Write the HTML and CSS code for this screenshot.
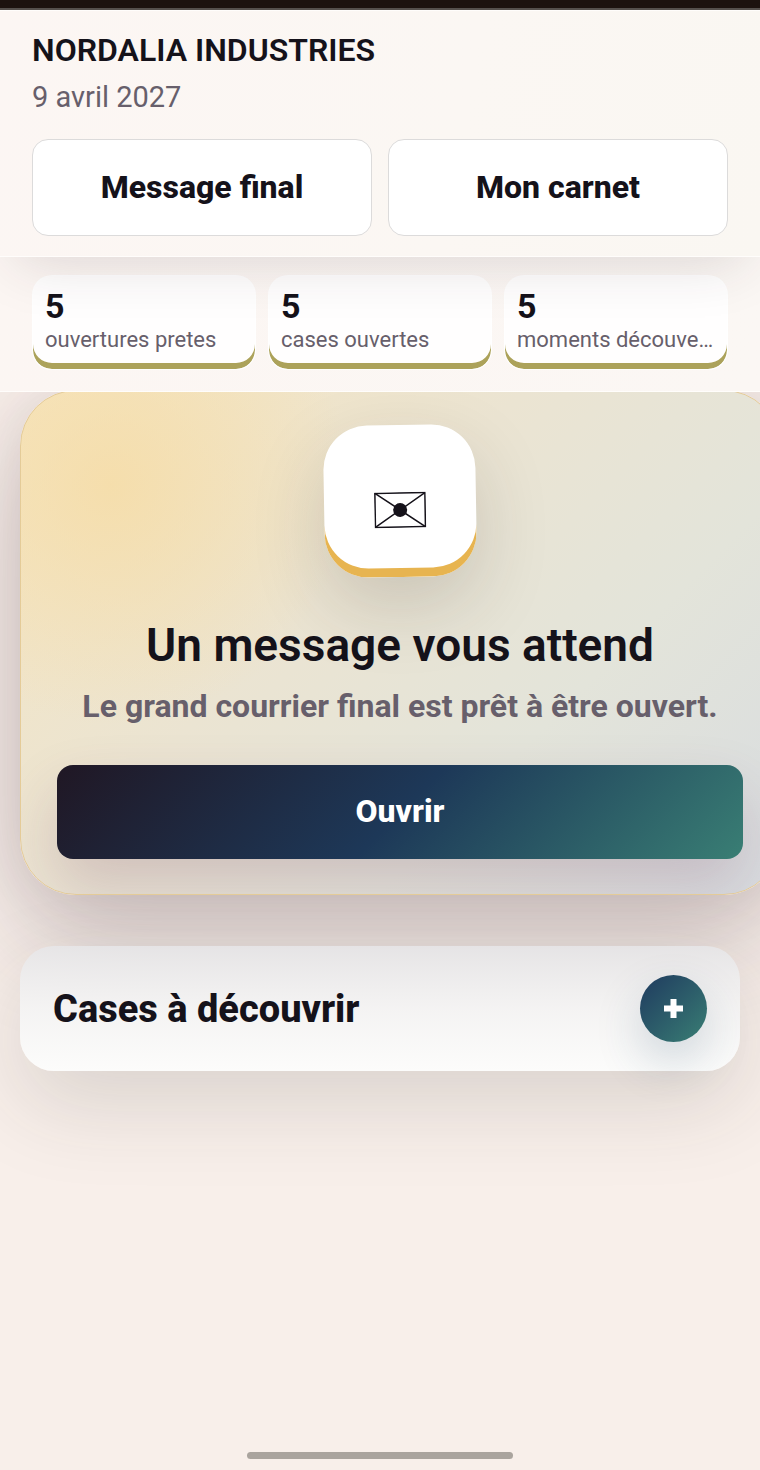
FILE: index.html
```html
<!DOCTYPE html>
<html lang="fr">
<head>
<meta charset="utf-8">
<meta name="viewport" content="width=device-width, initial-scale=1">
<title>Nordalia Industries</title>
<link rel="stylesheet" href="styles.css">
</head>
<body>
<div class="page">
  <header class="topbar">
    <h1 class="company">NORDALIA INDUSTRIES</h1>
    <p class="date">9 avril 2027</p>
    <nav class="actions">
      <button class="action" type="button">Message final</button>
      <button class="action" type="button">Mon carnet</button>
    </nav>
  </header>
  <section class="stats">
    <div class="stat"><strong class="stat-value">5</strong><span class="stat-label">ouvertures pretes</span></div>
    <div class="stat"><strong class="stat-value">5</strong><span class="stat-label">cases ouvertes</span></div>
    <div class="stat"><strong class="stat-value">5</strong><span class="stat-label">moments découverts</span></div>
  </section>
  <main class="content">
    <section class="hero">
      <div class="tile">
        <svg class="envelope" viewBox="0 0 52 36" aria-hidden="true">
          <rect x="1" y="1" width="50" height="34" fill="none" stroke="currentColor" stroke-width="1.5"/>
          <path d="M1 1 26 18 51 1M1 35 26 18 51 35" fill="none" stroke="currentColor" stroke-width="1.5"/>
          <circle cx="26" cy="18" r="7" fill="currentColor"/>
        </svg>
      </div>
      <h2 class="hero-title">Un message vous attend</h2>
      <p class="hero-text">Le grand courrier final est prêt à être ouvert.</p>
      <button class="open" type="button">Ouvrir</button>
    </section>
    <section class="cases">
      <h2 class="cases-title">Cases à découvrir</h2>
      <button class="plus" type="button" aria-label="Afficher les cases">
        <svg class="plus-icon" viewBox="0 0 19 19" aria-hidden="true"><path d="M6.500 0h6v6.500h6.500v6h-6.500V19h-6v-6.500H0v-6h6.500z" fill="currentColor"/></svg>
      </button>
    </section>
  </main>
  <footer class="home"><div class="home-bar"></div></footer>
</div>
</body>
</html>
```
FILE: styles.css
```css
* { box-sizing: border-box; }

body {
  margin: 0;
  font-family: Roboto, "Liberation Sans", sans-serif;
  color: #15121a;
  background: #f8efea;
}

h1, h2, p { margin: 0; }
button { font: inherit; color: inherit; padding: 0; }

.page {
  display: flex;
  flex-direction: column;
  min-height: 100vh;
  overflow: hidden;
}

.topbar {
  position: relative;
  z-index: 3;
  padding: 20px 32px;
  border-top: 10px solid #1c120f;
  border-bottom: 1px solid #fffdfb;
  background: linear-gradient(100deg, #fcf6f3, #fbf7f3 60%, #faf7f2);
  box-shadow: 0 20px 56px -16px rgba(50, 40, 45, 0.16), inset 0 1px 0 #fffdfb;
}
.topbar::before {
  content: "";
  position: absolute;
  inset: -2px 0 auto;
  height: 2px;
  background: #55504d;
}

.company { font-size: 32px; line-height: 40px; font-weight: 600; }
.date { margin-top: 7px; font-size: 29px; line-height: 40px; color: #675f6b; }

.actions {
  display: grid;
  grid-template-columns: 1fr 1fr;
  gap: 16px;
  margin-top: 22px;
}
.action {
  height: 97px;
  padding-bottom: 2px;
  border: 1px solid #dcdbdb;
  border-radius: 16px;
  background: #fff;
  font-size: 32px;
  font-weight: 800;
}

.stats {
  position: relative;
  z-index: 2;
  display: grid;
  grid-template-columns: repeat(3, 1fr);
  gap: 12px;
  padding: 18px 32px 21px;
  border-bottom: 1px solid #fffdfb;
  background: linear-gradient(100deg, #fcf6f3, #fbf7f4);
}
.stat {
  display: flex;
  flex-direction: column;
  min-width: 0;
  padding: 12px 12px 15px;
  border: 1px solid rgba(255, 255, 255, 0.8);
  border-radius: 20px;
  background: #fffefe;
  box-shadow: inset 0 -6px 0 #aca25a;
}
.stat-value { font-size: 34px; line-height: 36px; font-weight: 700; }
.stat-label {
  margin-top: 2px;
  overflow: hidden;
  font-size: 22px;
  line-height: 28px;
  color: #675f6b;
  text-overflow: ellipsis;
  white-space: nowrap;
}

.content { padding: 0 20px; }

.hero {
  display: flex;
  flex-direction: column;
  align-items: center;
  overflow: hidden;
  margin: -2px -40px 0 0;
  padding: 34px 36px 35px;
  border: 1px solid #e4cb98;
  border-radius: 56px;
  background:
    radial-gradient(circle at 90px 94px, rgba(246, 220, 165, 0.8), rgba(246, 220, 165, 0) 240px),
    linear-gradient(135deg, #f6e6c2 0%, #ebe4d2 40%, #e3e4da 68%, #d8dce0 100%);
  box-shadow: 0 44px 112px rgba(50, 28, 40, 0.24), 0 0 64px rgba(70, 40, 60, 0.09);
}
.tile {
  display: flex;
  justify-content: center;
  width: 152px;
  height: 152px;
  padding-top: 67px;
  border-radius: 44px;
  background: #fff;
  box-shadow: inset 0 -9px 0 #e7b450, 0 28px 72px rgba(50, 40, 40, 0.17);
  transform: rotate(-1deg);
}
.envelope { width: 52px; height: 36px; }
.hero-title { margin-top: 40px; font-size: 46px; line-height: 56px; font-weight: 600; text-align: center; }
.hero-text { margin-top: 13px; font-size: 32px; line-height: 40px; font-weight: 700; color: #675f6b; text-align: center; }
.open {
  align-self: stretch;
  height: 94px;
  margin-top: 39px;
  padding-bottom: 2px;
  border: 0;
  border-radius: 16px;
  background: linear-gradient(135deg, #201724 0%, #1d3858 50%, #397e74 100%);
  box-shadow: 0 28px 60px rgba(110, 50, 90, 0.2);
  color: #fff;
  font-size: 32px;
  font-weight: 800;
}

.cases {
  display: flex;
  align-items: center;
  justify-content: space-between;
  margin-top: 51px;
  padding: 28px 32px;
  border-radius: 34px;
  border: 1px solid transparent;
  background: linear-gradient(rgba(230, 230, 232, 0.85), rgba(244, 244, 244, 0.9) 50%, #fcfcfb) border-box;
  box-shadow: 0 32px 88px rgba(50, 45, 40, 0.15);
}
.cases-title { font-size: 38px; line-height: 48px; font-weight: 800; }
.plus {
  display: grid;
  place-items: center;
  flex: none;
  width: 67px;
  height: 67px;
  border: 0;
  border-radius: 50%;
  background: linear-gradient(135deg, #1f3a5f, #397e74);
  box-shadow: 0 20px 48px rgba(31, 68, 105, 0.2);
  color: #fff;
}
.plus-icon { width: 19px; height: 19px; }

.home { margin-top: auto; padding: 20px 0 11px; }
.home-bar {
  width: 35%;
  height: 7px;
  margin: 0 auto;
  border-radius: 4px;
  background: #aaa49e;
}
```
